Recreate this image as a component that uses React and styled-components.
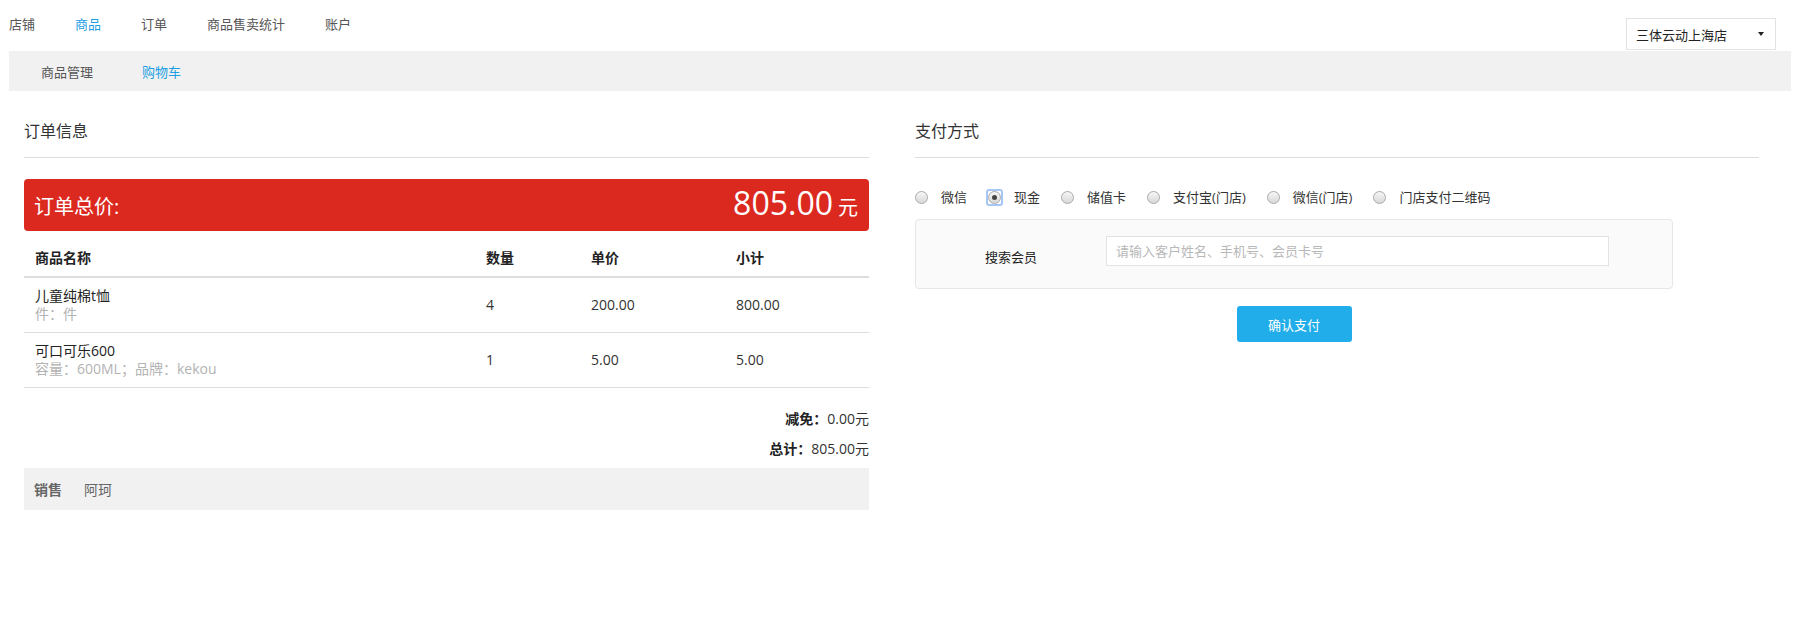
import React, { useState } from 'react';
import styled, { createGlobalStyle } from 'styled-components';

const GlobalStyle = createGlobalStyle`
  body {
    margin: 0;
    background: #fff;
    color: #333;
    font-family: "Open Sans", "Noto Sans CJK SC", sans-serif;
  }
  * { box-sizing: border-box; }
`;

const Page = styled.div`
  padding: 0 19px 0 9px;
`;

const TopBar = styled.div`
  display: flex;
  justify-content: space-between;
  align-items: flex-start;
  height: 51px;
`;

const NavList = styled.div`
  display: flex;
  gap: 40px;
  padding-top: 14px;
  font-size: 13px;
  line-height: 20px;
`;

const NavItem = styled.span`
  color: ${(p) => (p.$active ? '#1f9fe3' : '#555')};
  cursor: pointer;
`;

const StoreSelect = styled.div`
  margin-top: 18px;
  margin-right: 15px;
  width: 150px;
  height: 32px;
  border: 1px solid #e3e3e3;
  display: flex;
  align-items: center;
  justify-content: space-between;
  padding: 0 11px 0 9px;
  font-size: 13px;
  color: #222;
`;

const Caret = styled.span`
  width: 0;
  height: 0;
  border-left: 3.5px solid transparent;
  border-right: 3.5px solid transparent;
  border-top: 4px solid #222;
`;

const SubBar = styled.div`
  height: 40px;
  background: #f1f1f1;
  display: flex;
  align-items: center;
  gap: 49px;
  padding-left: 32px;
  font-size: 13px;
`;

const Main = styled.div`
  display: flex;
  gap: 46px;
  padding-left: 15px;
`;

const Column = styled.div`
  width: ${(p) => p.$w}px;
`;

const SectionTitle = styled.div`
  padding: 29px 0 15px;
  font-size: 16px;
  line-height: 22px;
  color: #333;
  border-bottom: 1px solid #ddd;
`;

const TotalBar = styled.div`
  margin-top: 21px;
  height: 52px;
  background: #dc2920;
  border-radius: 4px;
  display: flex;
  align-items: center;
  justify-content: space-between;
  padding: 0 11px 0 10px;
  color: #fff;
`;

const TotalLabel = styled.span`
  font-size: 20px;
`;

const Amount = styled.span`
  display: flex;
  align-items: baseline;
  font-size: 32px;
  line-height: 42px;
`;

const Unit = styled.span`
  font-size: 20px;
  margin-left: 5px;
`;

const Table = styled.table`
  width: 100%;
  border-collapse: collapse;
  table-layout: fixed;
  font-size: 14px;
`;

const Th = styled.th`
  width: ${(p) => (p.$w ? `${p.$w}px` : 'auto')};
  text-align: left;
  font-weight: bold;
  padding: 18px 11px 9px;
  line-height: 18px;
  color: #222;
  border-bottom: 2px solid #ddd;
`;

const Td = styled.td`
  padding: 9px 11px;
  line-height: 18px;
  vertical-align: middle;
  border-bottom: 1px solid #ddd;
  color: #333;
`;

const ItemName = styled.div`
  color: #222;
`;

const ItemSpec = styled.div`
  color: #b3b3b3;
`;

const Summary = styled.div`
  padding-top: 21px;
  display: flex;
  flex-direction: column;
  align-items: flex-end;
  gap: 10px;
  font-size: 14px;
  line-height: 20px;
`;

const SummaryLabel = styled.b`
  color: #222;
`;

const SellerBar = styled.div`
  margin-top: 9px;
  height: 42px;
  background: #f1f1f1;
  display: flex;
  align-items: center;
  gap: 22px;
  padding-left: 10px;
  font-size: 14px;
  color: #666;
`;

const RadioRow = styled.div`
  margin-top: 29px;
  display: flex;
  align-items: center;
  font-size: 13px;
  line-height: 20px;
`;

const RadioOption = styled.label`
  display: flex;
  align-items: center;
  margin-right: 21px;
  cursor: pointer;
  color: #333;
`;

const RadioDot = styled.span`
  position: relative;
  width: 13px;
  height: 13px;
  margin-right: 13px;
  border-radius: 50%;
  border: 1px solid #a9a9a9;
  background: linear-gradient(#f6f6f6, #d8d8d8);
  display: flex;
  align-items: center;
  justify-content: center;

  &::before {
    content: '';
    display: ${(p) => (p.$checked ? 'block' : 'none')};
    position: absolute;
    inset: -3px;
    border: 2px solid #a6c7f5;
    border-radius: 3px;
  }

  &::after {
    content: '';
    display: ${(p) => (p.$checked ? 'block' : 'none')};
    width: 5px;
    height: 5px;
    border-radius: 50%;
    background: #444;
  }
`;

const SearchPanel = styled.div`
  margin-top: 12px;
  width: 758px;
  height: 70px;
  border: 1px solid #e6e6e6;
  border-radius: 4px;
  background: #fafafa;
  display: flex;
  align-items: center;
  padding-left: 69px;
`;

const SearchLabel = styled.span`
  width: 121px;
  font-size: 13px;
  color: #222;
  padding-top: 5px;
`;

const SearchInput = styled.input`
  width: 503px;
  height: 30px;
  margin-bottom: 6px;
  border: 1px solid #e3e3e3;
  background: #fff;
  padding: 0 9px;
  font-family: inherit;
  font-size: 13px;
  outline: none;

  &::placeholder {
    color: #b8b8b8;
  }
`;

const ButtonRow = styled.div`
  width: 758px;
  display: flex;
  justify-content: center;
  padding-top: 17px;
`;

const PayButton = styled.button`
  width: 115px;
  height: 36px;
  border: none;
  border-radius: 3px;
  background: #20adea;
  color: #fff;
  font-family: inherit;
  font-size: 13px;
  cursor: pointer;
`;

const navItems = ['店铺', '商品', '订单', '商品售卖统计', '账户'];

const items = [
  { name: '儿童纯棉t恤', spec: '件：件', qty: 4, price: '200.00', subtotal: '800.00' },
  { name: '可口可乐600', spec: '容量：600ML；品牌：kekou', qty: 1, price: '5.00', subtotal: '5.00' },
];

const payments = ['微信', '现金', '储值卡', '支付宝(门店)', '微信(门店)', '门店支付二维码'];

function App() {
  const [payment, setPayment] = useState('现金');

  return (
    <Page>
      <GlobalStyle />
      <TopBar>
        <NavList>
          {navItems.map((n) => (
            <NavItem key={n} $active={n === '商品'}>{n}</NavItem>
          ))}
        </NavList>
        <StoreSelect>
          三体云动上海店
          <Caret />
        </StoreSelect>
      </TopBar>
      <SubBar>
        <NavItem>商品管理</NavItem>
        <NavItem $active>购物车</NavItem>
      </SubBar>

      <Main>
        <Column $w={845}>
          <SectionTitle>订单信息</SectionTitle>
          <TotalBar>
            <TotalLabel>订单总价:</TotalLabel>
            <Amount>
              805.00<Unit>元</Unit>
            </Amount>
          </TotalBar>
          <Table>
            <thead>
              <tr>
                <Th $w={451}>商品名称</Th>
                <Th $w={105}>数量</Th>
                <Th $w={145}>单价</Th>
                <Th>小计</Th>
              </tr>
            </thead>
            <tbody>
              {items.map((it) => (
                <tr key={it.name}>
                  <Td>
                    <ItemName>{it.name}</ItemName>
                    <ItemSpec>{it.spec}</ItemSpec>
                  </Td>
                  <Td>{it.qty}</Td>
                  <Td>{it.price}</Td>
                  <Td>{it.subtotal}</Td>
                </tr>
              ))}
            </tbody>
          </Table>
          <Summary>
            <div><SummaryLabel>减免：</SummaryLabel>0.00元</div>
            <div><SummaryLabel>总计：</SummaryLabel>805.00元</div>
          </Summary>
          <SellerBar>
            <b>销售</b>
            <span>阿珂</span>
          </SellerBar>
        </Column>

        <Column $w={844}>
          <SectionTitle>支付方式</SectionTitle>
          <RadioRow>
            {payments.map((p) => (
              <RadioOption key={p} onClick={() => setPayment(p)}>
                <RadioDot $checked={payment === p} />
                {p}
              </RadioOption>
            ))}
          </RadioRow>
          <SearchPanel>
            <SearchLabel>搜索会员</SearchLabel>
            <SearchInput placeholder="请输入客户姓名、手机号、会员卡号" />
          </SearchPanel>
          <ButtonRow>
            <PayButton>确认支付</PayButton>
          </ButtonRow>
        </Column>
      </Main>
    </Page>
  );
}

export default App;
